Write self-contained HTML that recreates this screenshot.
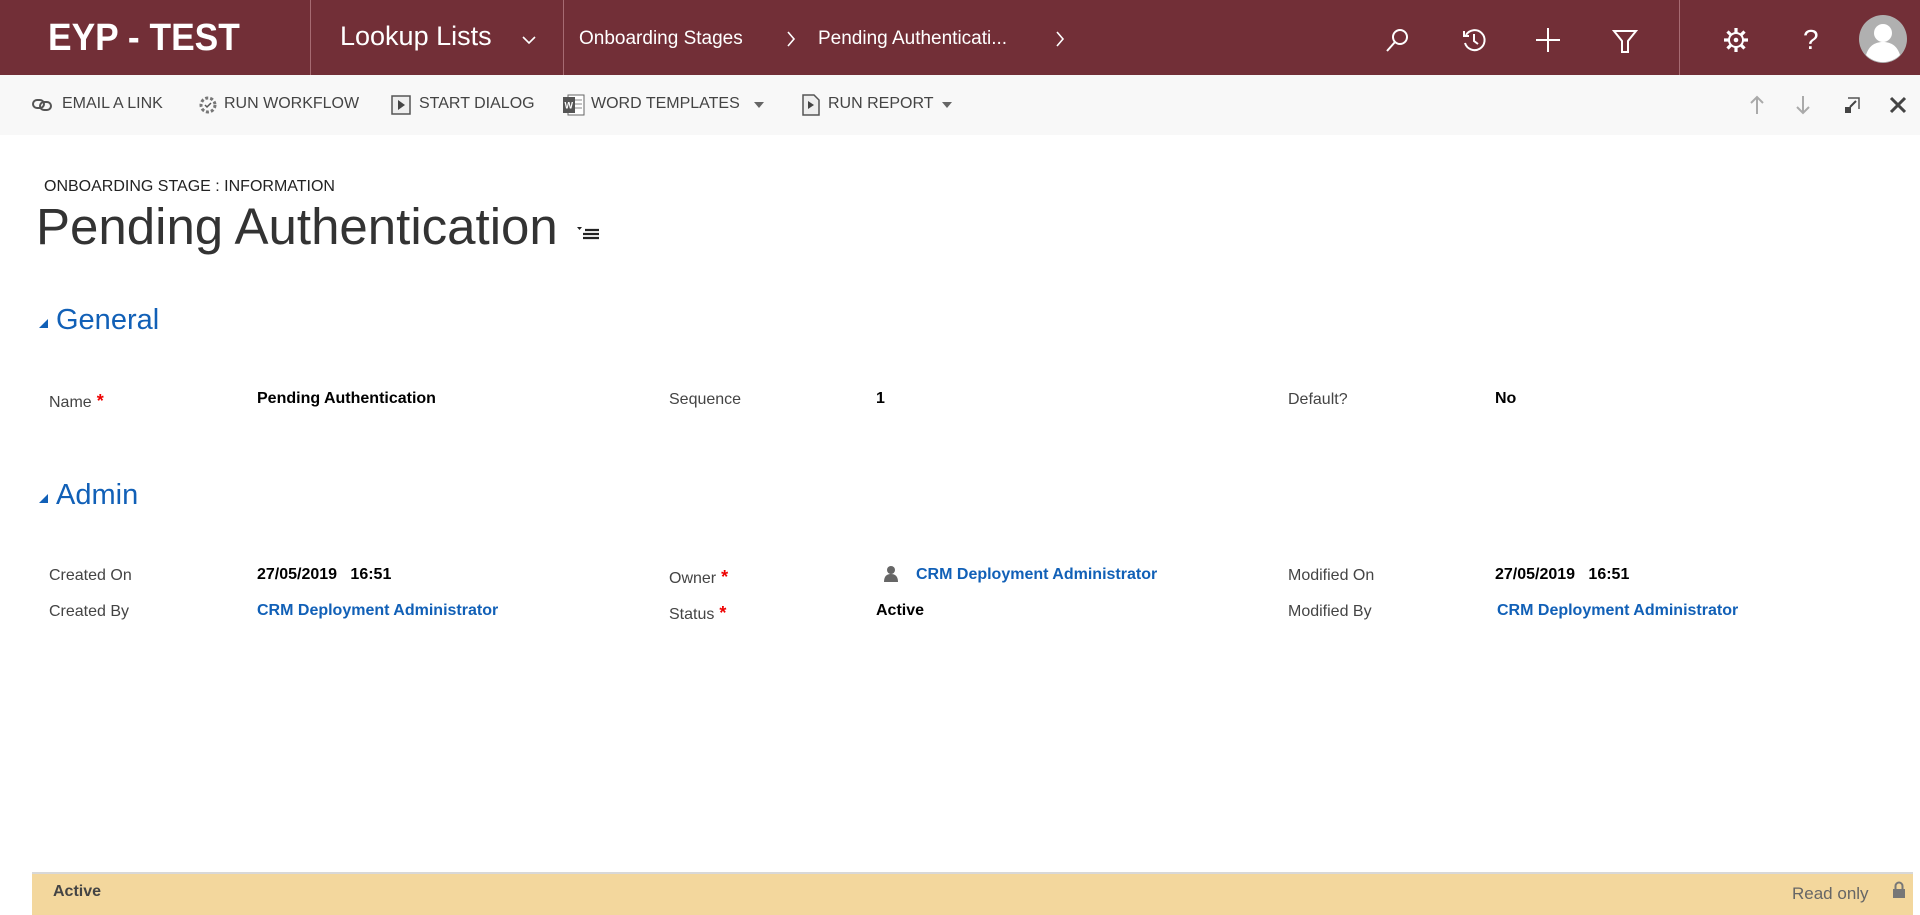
<!DOCTYPE html>
<html><head><meta charset="utf-8"><style>
*{margin:0;padding:0;box-sizing:border-box}
body{width:1920px;height:915px;overflow:hidden;background:#fff;font-family:"Liberation Sans",sans-serif;position:relative;color:#222}
.a{position:absolute;white-space:nowrap}
#top{position:absolute;left:0;top:0;width:1920px;height:75px;background:#722f37}
.w{color:#fff}
.sep{position:absolute;top:0;width:1px;height:75px;background:#a66b72}
#tb{position:absolute;left:0;top:75px;width:1920px;height:60px;background:#f8f8f8}
.tbt{font-size:16px;color:#444;top:95px}
.lbl{font-size:16px;color:#444}
.val{font-size:16px;font-weight:bold;color:#000}
.lnk{font-size:16px;font-weight:bold;color:#1160b7}
.req{color:#e00;font-size:18px;font-weight:bold}
.sec{font-size:29px;color:#1160b7}
.tri{width:0;height:0;border-left:9px solid transparent;border-bottom:9px solid #1160b7}
</style></head><body>
<div id="top"></div>
<div class="a w" style="left:48px;top:17px;font-size:38px;font-weight:bold;letter-spacing:0px;transform:scaleX(0.93);transform-origin:left">EYP - TEST</div>
<div class="sep" style="left:310px"></div>
<div class="a w" style="left:340px;top:21px;font-size:27px">Lookup Lists</div>
<svg class="a" style="left:522px;top:35px" width="14" height="10"><path d="M1 2l6 6 6-6" stroke="#fff" stroke-width="1.6" fill="none"/></svg>
<div class="sep" style="left:563px"></div>
<div class="a w" style="left:579px;top:28px;font-size:19px">Onboarding Stages</div>
<svg class="a" style="left:786px;top:31px" width="10" height="16"><path d="M2 1l6 7-6 7" stroke="#fff" stroke-width="1.6" fill="none"/></svg>
<div class="a w" style="left:818px;top:28px;font-size:19px">Pending Authenticati...</div>
<svg class="a" style="left:1055px;top:31px" width="10" height="16"><path d="M2 1l6 7-6 7" stroke="#fff" stroke-width="1.6" fill="none"/></svg>
<svg class="a" style="left:1385px;top:27px" width="26" height="26"><circle cx="15" cy="10" r="7" stroke="#fff" stroke-width="2" fill="none"/><path d="M10 15L2 24" stroke="#fff" stroke-width="2"/></svg>
<svg class="a" style="left:1461px;top:27px" width="26" height="26"><path d="M5 8A10 10 0 1 1 4 16" stroke="#fff" stroke-width="2" fill="none"/><path d="M3 4v5h5" stroke="#fff" stroke-width="2" fill="none"/><path d="M13 7v7l4 3" stroke="#fff" stroke-width="2" fill="none"/></svg>
<svg class="a" style="left:1535px;top:27px" width="26" height="26"><path d="M13 1v24M1 13h24" stroke="#fff" stroke-width="2"/></svg>
<svg class="a" style="left:1612px;top:29px" width="26" height="26"><path d="M2 2h22l-8 10v11h-6V12z" stroke="#fff" stroke-width="2" fill="none"/></svg>
<div class="sep" style="left:1679px"></div>
<svg class="a" style="left:1722px;top:26px" width="28" height="28"><g stroke="#fff" stroke-width="3.2"><path d="M14 2v5M14 21v5M2 14h5M21 14h5M5.5 5.5l3.5 3.5M19 19l3.5 3.5M5.5 22.5l3.5-3.5M19 9l3.5-3.5"/></g><circle cx="14" cy="14" r="7" stroke="#fff" stroke-width="2" fill="#722f37"/><circle cx="14" cy="14" r="2.3" fill="#fff"/></svg>
<div class="a w" style="left:1803px;top:24px;font-size:28px">?</div>
<svg class="a" style="left:1859px;top:15px" width="48" height="48"><circle cx="24" cy="24" r="24" fill="#b0b0b0"/><circle cx="24" cy="18" r="9" fill="#fff"/><path d="M7 40c3-10 10-13 17-13s14 3 17 13a24 24 0 0 1-34 0z" fill="#fff"/></svg>

<div id="tb"></div>
<svg class="a" style="left:32px;top:98px" width="20" height="14"><rect x="1" y="2" width="11" height="8" rx="4" stroke="#555" stroke-width="2" fill="none"/><rect x="8" y="4" width="11" height="8" rx="4" stroke="#555" stroke-width="2" fill="none"/></svg>
<div class="a tbt" style="left:62px">EMAIL A LINK</div>
<svg class="a" style="left:198px;top:94px" width="20" height="22"><circle cx="10" cy="11" r="7" stroke="#777" stroke-width="3" fill="none" stroke-dasharray="3 2"/><path d="M7 11l2 2 4-4" stroke="#555" stroke-width="1.5" fill="none"/></svg>
<div class="a tbt" style="left:224px">RUN WORKFLOW</div>
<svg class="a" style="left:391px;top:95px" width="20" height="20"><rect x="1" y="1" width="18" height="18" stroke="#555" stroke-width="1.5" fill="#eee"/><path d="M7 5l7 5-7 5z" fill="#444"/></svg>
<div class="a tbt" style="left:419px">START DIALOG</div>
<svg class="a" style="left:562px;top:93px" width="24" height="24"><rect x="6" y="2" width="16" height="20" fill="#fff" stroke="#666"/><path d="M12 7h8M12 11h8M12 15h8" stroke="#888"/><rect x="1" y="4" width="12" height="16" fill="#555"/><text x="2.5" y="15.5" font-size="9" fill="#fff" font-family="Liberation Sans" font-weight="bold">W</text></svg>
<div class="a tbt" style="left:591px">WORD TEMPLATES</div>
<svg class="a" style="left:754px;top:102px" width="10" height="6"><path d="M0 0h10L5 6z" fill="#666"/></svg>
<svg class="a" style="left:802px;top:94px" width="18" height="22"><path d="M1 1h11l5 5v15H1z" stroke="#555" stroke-width="1.5" fill="#eee"/><path d="M6 7l6 4-6 4z" fill="#444"/></svg>
<div class="a tbt" style="left:828px">RUN REPORT</div>
<svg class="a" style="left:942px;top:102px" width="10" height="6"><path d="M0 0h10L5 6z" fill="#666"/></svg>
<svg class="a" style="left:1749px;top:95px" width="16" height="20"><path d="M8 2v17M2 8l6-6 6 6" stroke="#aaa" stroke-width="2" fill="none"/></svg>
<svg class="a" style="left:1795px;top:95px" width="16" height="20"><path d="M8 1v17M2 12l6 6 6-6" stroke="#aaa" stroke-width="2" fill="none"/></svg>
<svg class="a" style="left:1843px;top:96px" width="18" height="18"><path d="M5 2h11v11" stroke="#555" stroke-width="1.5" fill="none"/><path d="M13 5L7 11" stroke="#444" stroke-width="2"/><rect x="2" y="11" width="6" height="6" fill="#444"/></svg>
<svg class="a" style="left:1889px;top:96px" width="18" height="18"><path d="M2 2l14 14M16 2L2 16" stroke="#444" stroke-width="3"/></svg>

<div class="a" style="left:44px;top:178px;font-size:16px;color:#222">ONBOARDING STAGE : INFORMATION</div>
<div class="a" style="left:36px;top:197px;font-size:51px;color:#333;font-weight:300">Pending Authentication</div>
<svg class="a" style="left:577px;top:226px" width="26" height="16"><path d="M0 1h5L2.5 4z" fill="#222"/><path d="M8 4h14M6 8h16M6 12h16" stroke="#222" stroke-width="2.2"/></svg>

<div class="a tri" style="left:39px;top:319px"></div>
<div class="a sec" style="left:56px;top:304px">General</div>
<div class="a lbl" style="left:49px;top:391px">Name<span class="req"> *</span></div>
<div class="a val" style="left:257px;top:390px">Pending Authentication</div>
<div class="a lbl" style="left:669px;top:391px">Sequence</div>
<div class="a val" style="left:876px;top:390px">1</div>
<div class="a lbl" style="left:1288px;top:391px">Default?</div>
<div class="a val" style="left:1495px;top:390px">No</div>

<div class="a tri" style="left:39px;top:494px"></div>
<div class="a sec" style="left:56px;top:479px">Admin</div>
<div class="a lbl" style="left:49px;top:567px">Created On</div>
<div class="a val" style="left:257px;top:566px">27/05/2019&nbsp;&nbsp;&nbsp;16:51</div>
<div class="a lbl" style="left:669px;top:567px">Owner<span class="req"> *</span></div>
<svg class="a" style="left:883px;top:565px" width="16" height="18"><circle cx="8" cy="5" r="4" fill="#666"/><path d="M1 17c0-6 3-8 7-8s7 2 7 8z" fill="#666"/></svg>
<div class="a lnk" style="left:916px;top:566px">CRM Deployment Administrator</div>
<div class="a lbl" style="left:1288px;top:567px">Modified On</div>
<div class="a val" style="left:1495px;top:566px">27/05/2019&nbsp;&nbsp;&nbsp;16:51</div>
<div class="a lbl" style="left:49px;top:603px">Created By</div>
<div class="a lnk" style="left:257px;top:602px">CRM Deployment Administrator</div>
<div class="a lbl" style="left:669px;top:603px">Status<span class="req"> *</span></div>
<div class="a val" style="left:876px;top:602px">Active</div>
<div class="a lbl" style="left:1288px;top:603px">Modified By</div>
<div class="a lnk" style="left:1497px;top:602px">CRM Deployment Administrator</div>

<div class="a" style="left:32px;top:872px;width:1881px;height:43px;background:#f3d79d;border-top:2px solid #d8d8d8"></div>
<div class="a" style="left:53px;top:883px;font-size:16px;font-weight:bold;color:#444">Active</div>
<div class="a" style="left:1792px;top:884px;font-size:17px;color:#666">Read only</div>
<svg class="a" style="left:1892px;top:881px" width="14" height="18"><path d="M3.5 8V5a3.5 3.5 0 0 1 7 0v3" stroke="#777" stroke-width="2" fill="none"/><rect x="1" y="8" width="12" height="9" fill="#777"/></svg>
</body></html>
